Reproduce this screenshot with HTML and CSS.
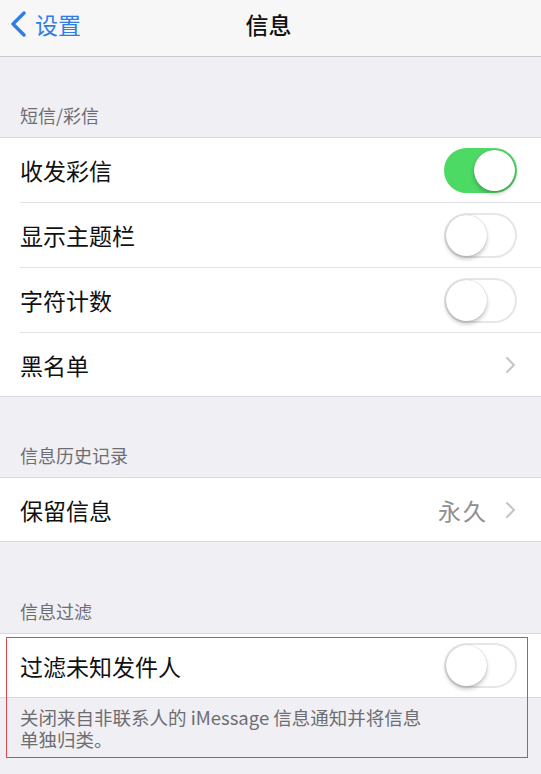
FILE: index.html
```html
<!DOCTYPE html>
<html lang="zh-CN">
<head>
<meta charset="utf-8">
<link rel="stylesheet" href="styles.css">
</head>
<body>
<div class="screen">
  <header class="nav">
    <div class="back">
      <svg class="back-icon" width="20" height="26" viewBox="0 0 20 26"><path d="M15 2 L4 13 L15 24" fill="none" stroke="#2f7de8" stroke-width="3.4" stroke-linecap="round" stroke-linejoin="round"/></svg>
      <span class="back-text">设置</span>
    </div>
    <div class="title">信息</div>
  </header>

  <div class="sec-head h1">短信/彩信</div>
  <div class="group">
    <div class="row"><span class="label">收发彩信</span><span class="switch on"><span class="knob"></span></span></div>
    <div class="row"><span class="label">显示主题栏</span><span class="switch"><span class="knob"></span></span></div>
    <div class="row"><span class="label">字符计数</span><span class="switch"><span class="knob"></span></span></div>
    <div class="row"><span class="label">黑名单</span><span class="chev"><svg width="12" height="18" viewBox="0 0 12 18"><path d="M2 2 L9 9 L2 16" fill="none" stroke="#c4c4c9" stroke-width="2" stroke-linecap="round" stroke-linejoin="round"/></svg></span></div>
  </div>

  <div class="sec-head h2">信息历史记录</div>
  <div class="group">
    <div class="row"><span class="label">保留信息</span><span class="detail">永久</span><span class="chev"><svg width="12" height="18" viewBox="0 0 12 18"><path d="M2 2 L9 9 L2 16" fill="none" stroke="#c4c4c9" stroke-width="2" stroke-linecap="round" stroke-linejoin="round"/></svg></span></div>
  </div>

  <div class="sec-head h3">信息过滤</div>
  <div class="group">
    <div class="row"><span class="label">过滤未知发件人</span><span class="switch"><span class="knob"></span></span></div>
  </div>
  <div class="foot">关闭来自非联系人的 iMessage 信息通知并将信息<br>单独归类。</div>

  <div class="mark"></div>
</div>
</body>
</html>
```

FILE: styles.css
```css
* { box-sizing: border-box; }
html, body { margin: 0; padding: 0; }
body {
  background: #efeff4;
  font-family: "Noto Sans CJK SC", "Noto Sans", sans-serif;
  width: 541px;
  height: 774px;
  overflow: hidden;
}
.screen { position: relative; width: 541px; height: 774px; }

.nav {
  position: relative;
  height: 57px;
  background: #f7f7f8;
  border-bottom: 1px solid #c9c9cd;
  display: flex;
  align-items: center;
  padding-bottom: 8px;
}
.back {
  display: flex;
  align-items: center;
  padding-left: 9px;
  gap: 6px;
}
.back-icon { display: block; }
.back-text {
  color: #2f7de8;
  font-size: 23px;
  line-height: 28px;
}
.title {
  position: absolute;
  left: 0; right: 0; top: 8px;
  text-align: center;
  font-size: 23px;
  line-height: 32px;
  font-weight: 500;
  color: #111;
  margin-left: -4px;
}

.sec-head {
  display: flex;
  align-items: flex-end;
  padding: 0 0 11px 20px;
  font-size: 18px;
  line-height: 22px;
  color: #6d6d72;
}
.h1 { height: 80px; }
.h2 { height: 80px; }
.h3 { height: 91px; }

.group {
  background: #fff;
  border-top: 1px solid #d9d9dd;
  border-bottom: 1px solid #d9d9dd;
}
.row {
  height: 65px;
  margin-left: 20px;
  padding-right: 24px;
  display: flex;
  align-items: center;
  border-bottom: 1px solid #e2e2e6;
}
.row:last-child { border-bottom: none; height: 63px; }
.label {
  flex: 1;
  font-size: 23px;
  color: #111;
  line-height: 30px;
}
.detail {
  font-size: 23px;
  color: #8e8e93;
  margin-right: 17px;
  letter-spacing: 2px;
}
.chev { display: flex; align-items: center; }

.switch {
  position: relative;
  width: 73px;
  height: 45px;
  border-radius: 23px;
  background: #fff;
  border: 2px solid #e6e6e8;
}
.switch .knob {
  position: absolute;
  top: 0; left: 0;
  width: 41px;
  height: 41px;
  border-radius: 50%;
  background: #fff;
  box-shadow: 0 3px 4px rgba(0,0,0,0.22), 0 0 1px rgba(0,0,0,0.3);
}
.switch.on {
  background: #4cd964;
  border-color: #4cd964;
}
.switch.on .knob { left: 28px; }

.foot {
  padding: 8px 20px 0 20px;
  font-size: 18.5px;
  line-height: 22px;
  color: #6d6d72;
}

.mark {
  position: absolute;
  left: 6px;
  top: 637px;
  width: 522px;
  height: 121px;
  border: 1px solid #e0454f;
  pointer-events: none;
}
```
